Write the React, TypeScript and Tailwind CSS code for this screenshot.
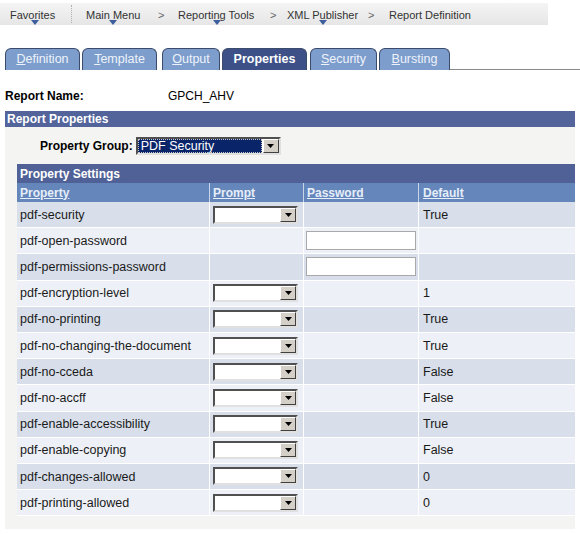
import React from 'react'

const rows = [
  { name: 'pdf-security', prompt: true, password: false, def: 'True' },
  { name: 'pdf-open-password', prompt: false, password: true, def: '' },
  { name: 'pdf-permissions-password', prompt: false, password: true, def: '' },
  { name: 'pdf-encryption-level', prompt: true, password: false, def: '1' },
  { name: 'pdf-no-printing', prompt: true, password: false, def: 'True' },
  { name: 'pdf-no-changing-the-document', prompt: true, password: false, def: 'True' },
  { name: 'pdf-no-cceda', prompt: true, password: false, def: 'False' },
  { name: 'pdf-no-accff', prompt: true, password: false, def: 'False' },
  { name: 'pdf-enable-accessibility', prompt: true, password: false, def: 'True' },
  { name: 'pdf-enable-copying', prompt: true, password: false, def: 'False' },
  { name: 'pdf-changes-allowed', prompt: true, password: false, def: '0' },
  { name: 'pdf-printing-allowed', prompt: true, password: false, def: '0' },
]

function NavArrow({ left }: { left: number }) {
  return (
    <svg
      className="absolute top-[17px]"
      style={{ left }}
      width="8"
      height="5"
      viewBox="0 0 8 5"
    >
      <path d="M0 0 L8 0 L4 5 Z" fill="#3d5f9e" />
    </svg>
  )
}

function DropButton() {
  return (
    <div className="w-[16px] h-full flex items-center justify-center bg-[#d4d0c8] border border-t-white border-l-white border-r-[#404040] border-b-[#404040]">
      <svg width="7" height="4" viewBox="0 0 7 4">
        <path d="M0 0 L7 0 L3.5 4 Z" fill="#000" />
      </svg>
    </div>
  )
}

function Select({ width }: { width: number }) {
  return (
    <div
      className="h-[18px] flex bg-white border-2 border-t-[#505050] border-l-[#505050] border-r-[#e0e0e0] border-b-[#e0e0e0]"
      style={{ width }}
    >
      <div className="flex-1" />
      <DropButton />
    </div>
  )
}

function Tab({ label, u, width, ml, active }: { label: string; u?: boolean; width: number; ml: number; active?: boolean }) {
  return (
    <div
      className={`h-[22px] flex items-center justify-center rounded-t-[6px] border border-b-0 border-[#3c4a6b] text-[12.5px] ${
        active ? 'bg-[#3d5087] text-white font-bold' : 'bg-[#7d9dcc] text-[#eef3fb]'
      }`}
      style={{ width, marginLeft: ml }}
    >
      {u ? (
        <span>
          <span className="underline">{label.charAt(0)}</span>
          {label.slice(1)}
        </span>
      ) : (
        label
      )}
    </div>
  )
}

export default function App() {
  return (
    <div className="w-[580px] h-[534px] bg-white text-black font-['Liberation_Sans',Arial,sans-serif] overflow-hidden">
      {/* Breadcrumb bar */}
      <div className="pt-[3px]">
        <div className="relative w-[548px] h-[22px] bg-gradient-to-b from-[#f4f4f4] to-[#e6e6e6] text-[11px] text-[#333] flex items-center">
          <span className="absolute left-[10px] top-[4px]">Favorites</span>
          <NavArrow left={31} />
          <div className="absolute left-[71px] top-[2px] h-[18px] border-l border-dotted border-[#b0b0b0]" />
          <span className="absolute left-[86px] top-[4px]">Main Menu</span>
          <NavArrow left={109} />
          <span className="absolute left-[158px] top-[4px] text-[#666]">&gt;</span>
          <span className="absolute left-[178px] top-[4px]">Reporting Tools</span>
          <NavArrow left={213} />
          <span className="absolute left-[270px] top-[4px] text-[#666]">&gt;</span>
          <span className="absolute left-[287px] top-[4px]">XML Publisher</span>
          <NavArrow left={319} />
          <span className="absolute left-[368px] top-[4px] text-[#666]">&gt;</span>
          <span className="absolute left-[389px] top-[4px]">Report Definition</span>
        </div>
      </div>

      {/* Tabs */}
      <div className="mt-[22px] flex items-end h-[23px]">
        <div className="w-[5px] self-stretch" />
        <Tab label="Definition" u width={75} ml={0} />
        <Tab label="Template" u width={75} ml={2} />
        <Tab label="Output" u width={58} ml={5} />
        <Tab label="Properties" width={85} ml={2} active />
        <Tab label="Security" u width={67} ml={3} />
        <Tab label="Bursting" u width={71} ml={2} />
        <div className="flex-1 border-b border-[#8a8a8a]" />
      </div>

      {/* Report name */}
      <div className="mt-[19px] flex items-center h-[14px] text-[12px]">
        <span className="ml-[5px] w-[163px] font-bold">Report Name:</span>
        <span>GPCH_AHV</span>
      </div>

      {/* Report properties */}
      <div className="mt-[8px] mx-[5px] bg-[#f4f4f2] pb-[13px]">
        <div className="h-[16px] bg-[#52649a] text-white font-bold text-[12px] pl-[2px] flex items-center">
          Report Properties
        </div>

        <div className="mt-[10px] flex items-center h-[18px] text-[12px]">
          <span className="ml-[35px] font-bold">Property Group:</span>
          <div className="ml-[3px] w-[145px] h-[18px] flex bg-white border-2 border-t-[#505050] border-l-[#505050] border-r-[#e0e0e0] border-b-[#e0e0e0]">
            <div className="flex-1 mr-[1px] flex items-center bg-[#0a246a] text-white text-[12.5px] leading-none pl-[3px] outline outline-1 outline-dotted outline-[#c8c8c8] -outline-offset-1">
              PDF Security
            </div>
            <DropButton />
          </div>
        </div>

        {/* Property settings grid */}
        <div className="mt-[9px] ml-[12px]">
          <div className="h-[19px] bg-[#4f6196] text-white font-bold text-[12px] pl-[3px] flex items-center">
            Property Settings
          </div>
          <div className="grid grid-cols-[193px_94px_115px_1fr] h-[19px] bg-[#6586bb] text-[#e6eef9] font-bold text-[12px] underline">
            <div className="pl-[3px] flex items-center border-r border-[#c9d6ea]">Property</div>
            <div className="pl-[3px] flex items-center border-r border-[#c9d6ea]">Prompt</div>
            <div className="pl-[3px] flex items-center border-r border-[#c9d6ea]">Password</div>
            <div className="pl-[4px] flex items-center">Default</div>
          </div>
          {rows.map((r, i) => (
            <div
              key={r.name}
              className={`grid grid-cols-[193px_94px_115px_1fr] h-[26.2px] text-[12.5px] text-[#1a1a1a] ${
                i % 2 === 0 ? 'bg-[#d8dfea]' : 'bg-[#edf0f6]'
              }`}
            >
              <div className="pl-[3px] pt-[1px] flex items-center border-r border-b border-white">{r.name}</div>
              <div className="pl-[3px] flex items-center border-r border-b border-white">
                {r.prompt && <Select width={85} />}
              </div>
              <div className="pl-[2px] flex items-center border-r border-b border-white">
                {r.password && (
                  <div className="w-[110px] h-[19px] bg-white border border-[#a8a8a8]" />
                )}
              </div>
              <div className="pl-[4px] pt-[1px] flex items-center border-b border-white">{r.def}</div>
            </div>
          ))}
        </div>
      </div>
    </div>
  )
}
